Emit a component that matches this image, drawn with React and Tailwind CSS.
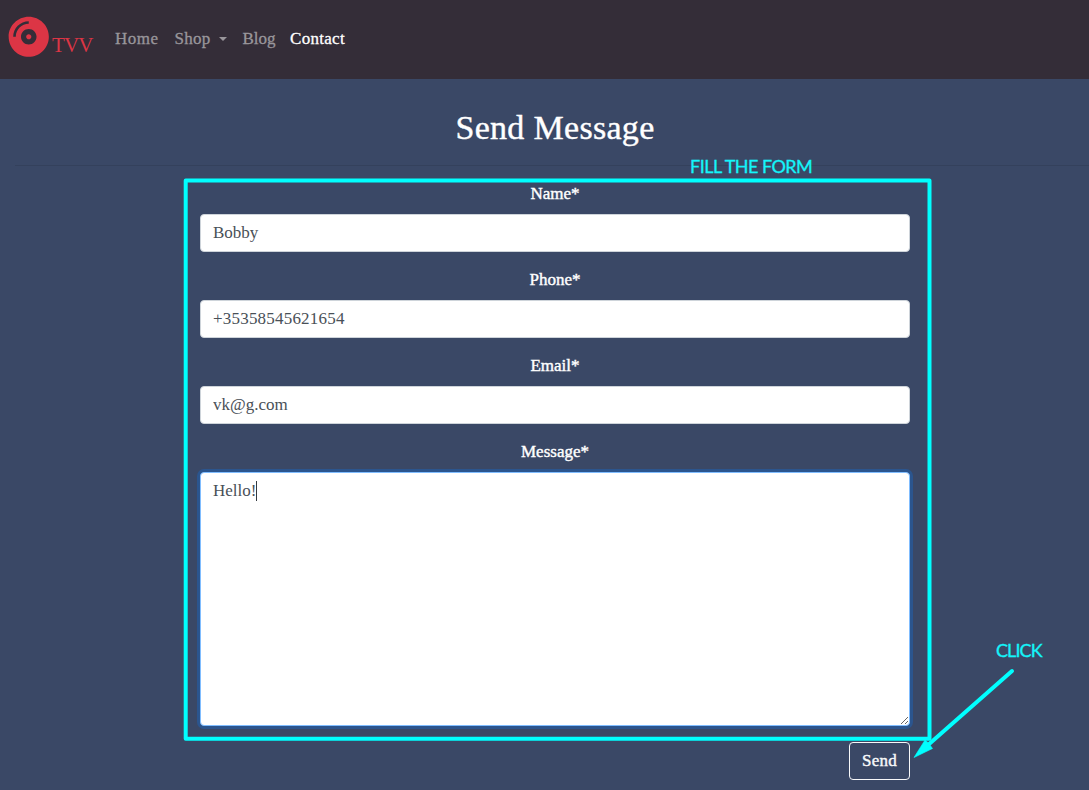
import React from "react";
import { FaCompactDisc } from "react-icons/fa";

const fieldBase =
  "block w-full rounded-[4px] border bg-white px-3 py-[6px] text-[17px] leading-6 text-[#495057] outline-none";

function Field({ label, children }) {
  return (
    <div className="mb-4">
      <label className="mb-2 block text-center text-[17px] leading-6 [-webkit-text-stroke:0.4px_white]">
        {label}
      </label>
      {children}
    </div>
  );
}

function Navbar() {
  return (
    <nav className="flex h-[79px] items-center bg-[#342d38] px-2 pb-[2px]">
      <a className="flex h-[42px] w-[84px] items-start text-[#dc3545]">
        <FaCompactDisc className="-ml-[0.5px] -mt-[2px] h-[41.5px] w-[41.5px] shrink-0" />
        <span className="ml-[3px] mt-[12px] text-[21px] leading-[30px] tracking-[-0.9px]">TVV</span>
      </a>
      <div className="ml-[23px] flex items-center text-[17px] leading-6 text-[#99969b] [-webkit-text-stroke:0.3px]">
        <a className="w-[59.5px] tracking-[0.5px]">Home</a>
        <a className="mr-4 flex w-[52px] items-center justify-between tracking-[0.3px]">
          Shop
          <span className="border-x-4 border-t-4 border-x-transparent border-t-current" />
        </a>
        <a className="w-[47.5px]">Blog</a>
        <a className="tracking-[0.3px] text-white">Contact</a>
      </div>
    </nav>
  );
}

function Annotations() {
  return (
    <div className="pointer-events-none absolute inset-0 font-['Lato',sans-serif] text-[18px] leading-6 text-[#14f5fa] [-webkit-text-stroke:0.3px]">
      <svg className="absolute inset-0" width="1089" height="790" fill="none" stroke="#00ffff">
        <rect x="185.7" y="180.5" width="743.8" height="558.2" strokeWidth="4" strokeLinejoin="round" />
        <path d="M1012 671L928 745" strokeWidth="4" strokeLinecap="round" />
        <path d="M914 757.5L925 740L928.5 743L932.5 748.5Z" fill="#00ffff" strokeWidth="0.6" />
      </svg>
      <span className="absolute left-[690px] top-[154px] whitespace-nowrap tracking-[-0.52px]">FILL THE FORM</span>
      <span className="absolute left-[996px] top-[638px] whitespace-nowrap tracking-[-0.9px]">CLICK</span>
    </div>
  );
}

export default function App() {
  return (
    <div className="relative h-[790px] w-[1089px] overflow-hidden bg-[#3a4866] font-['Liberation_Serif',serif] text-white">
      <Navbar />
      <main className="ml-[15px] w-[1080px] pt-[30px]">
        <h1 className="text-center text-[34px] leading-[38px] tracking-[0.3px] [-webkit-text-stroke:0.4px_white]">
          Send Message
        </h1>
        <hr className="mb-4 mt-[18px] border-t border-[#34415c]" />
        <form className="mx-auto w-[710px]">
          <Field label="Name*">
            <input className={`${fieldBase} h-[38px] border-[#ced4da]`} defaultValue="Bobby" />
          </Field>
          <Field label="Phone*">
            <input className={`${fieldBase} h-[38px] border-[#ced4da] tracking-[0.2px]`} defaultValue="+35358545621654" />
          </Field>
          <Field label="Email*">
            <input className={`${fieldBase} h-[38px] border-[#ced4da]`} defaultValue="vk@g.com" />
          </Field>
          <Field label="Message*">
            <div className="relative">
              <textarea
                className={`${fieldBase} h-[254px] resize border-[#80bdff] shadow-[0_0_0_3px_#2b558e]`}
                defaultValue="Hello!"
              />
              <span className="absolute left-[56px] top-[9px] h-5 w-px bg-[#343a40]" />
            </div>
          </Field>
          <div className="flex justify-end">
            <button
              type="button"
              className="h-[38px] w-[61px] rounded-[4px] border border-[#f8f9fa] text-[17px] leading-6 tracking-[0.2px] text-[#f8f9fa] [-webkit-text-stroke:0.4px]"
            >
              Send
            </button>
          </div>
        </form>
      </main>
      <Annotations />
    </div>
  );
}
